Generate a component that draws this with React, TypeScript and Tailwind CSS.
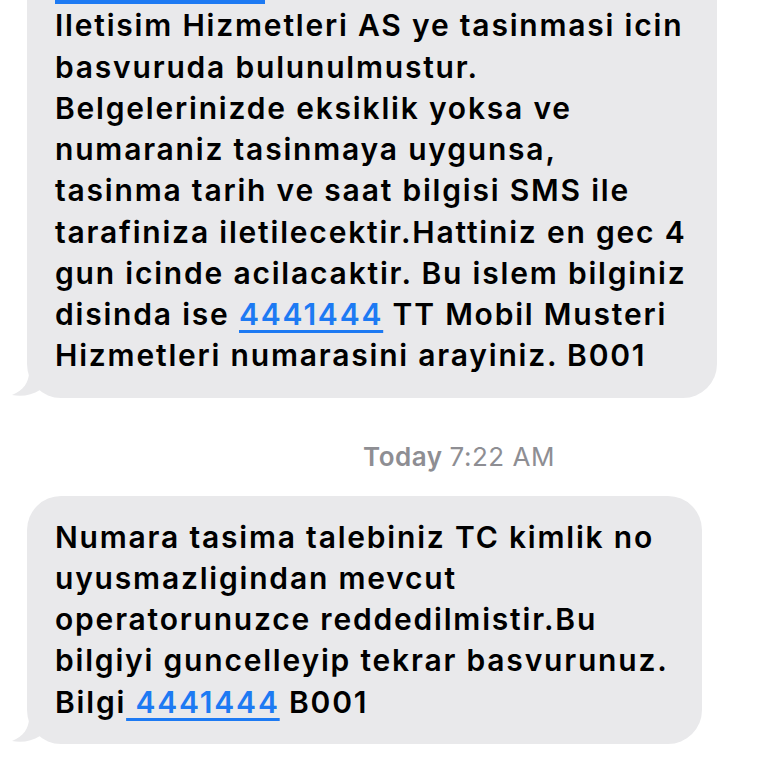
const LINK = "text-[#1d7af3] underline decoration-[3px] underline-offset-[5px]";

function Tail() {
  return (
    <svg
      className="absolute bottom-0 left-[-15px]"
      width="36"
      height="26"
      viewBox="0 0 36 26"
      fill="#e9e9eb"
    >
      <path d="M17 0 C17 10 12 18 0 23 C10 25 20 23 28 18 L36 0 Z" />
    </svg>
  );
}

function Bubble({ lines, width, className = "" }: { lines: React.ReactNode[]; width: string; className?: string }) {
  return (
    <div className={`relative ml-[27px] rounded-[34px] bg-[#e9e9eb] pl-[28px] pr-4 py-[21px] ${width} ${className}`}>
      <Tail />
      <div className="relative text-[30px] font-semibold leading-[41.25px] tracking-[0.06em] text-black whitespace-nowrap">
        {lines.map((l, i) => (
          <div key={i}>{l}</div>
        ))}
      </div>
    </div>
  );
}

export default function App() {
  const top = [
    <div className="flex h-[41.25px] items-end">
      <div className="mb-[1px] h-[4px] w-[210px] bg-[#1d7af3]" />
    </div>,
    "Iletisim Hizmetleri AS ye tasinmasi icin",
    "basvuruda bulunulmustur.",
    "Belgelerinizde eksiklik yoksa ve",
    "numaraniz tasinmaya uygunsa,",
    "tasinma tarih ve saat bilgisi SMS ile",
    "tarafiniza iletilecektir.Hattiniz en gec 4",
    "gun icinde acilacaktir. Bu islem bilginiz",
    <>
      disinda ise <span className={LINK}>4441444</span> TT Mobil Musteri
    </>,
    "Hizmetleri numarasini arayiniz. B001",
  ];
  const bottom = [
    "Numara tasima talebiniz TC kimlik no",
    "uyusmazligindan mevcut",
    "operatorunuzce reddedilmistir.Bu",
    "bilgiyi guncelleyip tekrar basvurunuz.",
    <>
      Bilgi<span className={LINK}> 4441444</span> B001
    </>,
  ];
  return (
    <div
      className="h-[768px] w-[768px] overflow-hidden bg-white"
      style={{ fontFamily: "Inter, 'Noto Sans', sans-serif" }}
    >
      <Bubble lines={top} width="w-[690px]" className="-mt-[57px]" />
      <div className="flex h-[98px] items-start justify-center pl-[150px] pt-[44px] text-[26px] leading-[30px] tracking-[0.02em] text-[#8e8e93]">
        <span className="font-semibold">Today</span>
        <span className="ml-[7px]">7:22 AM</span>
      </div>
      <Bubble lines={bottom} width="w-[675px]" />
    </div>
  );
}
